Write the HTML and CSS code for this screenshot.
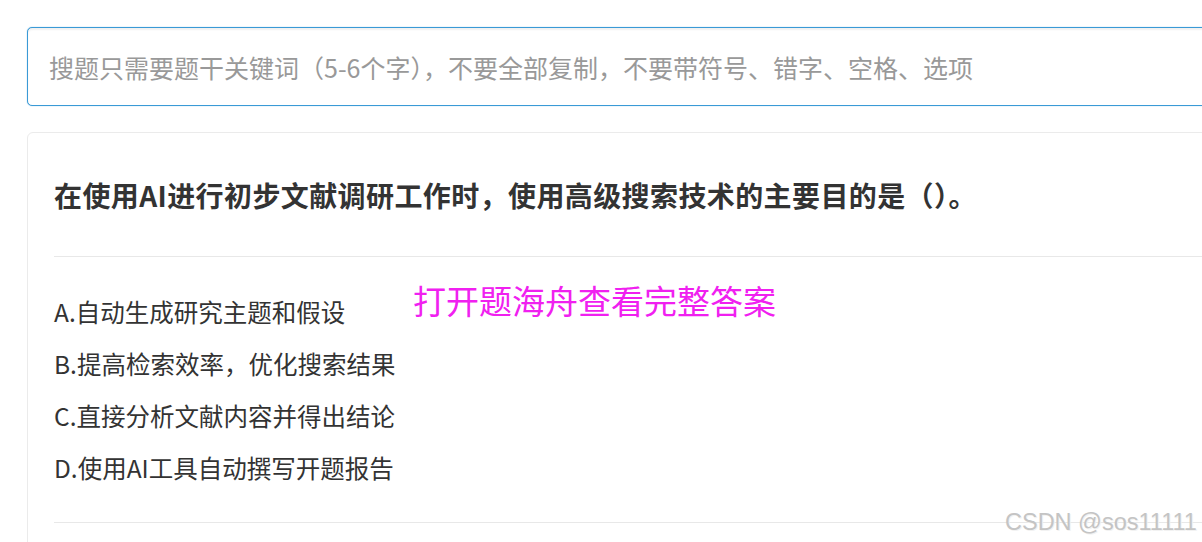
FILE: index.html
```html
<!DOCTYPE html>
<html lang="zh-CN">
<head>
<meta charset="utf-8">
<title>搜题</title>
<link rel="stylesheet" href="styles.css">
</head>
<body>
<div class="page">
  <div class="search">
    <input class="search-input" type="text" placeholder="搜题只需要题干关键词（5-6个字），不要全部复制，不要带符号、错字、空格、选项">
  </div>
  <div class="card">
    <h2 class="question">在使用AI进行初步文献调研工作时，使用高级搜索技术的主要目的是（）。</h2>
    <ul class="options">
      <li>A.自动生成研究主题和假设</li>
      <li>B.提高检索效率，优化搜索结果</li>
      <li>C.直接分析文献内容并得出结论</li>
      <li>D.使用AI工具自动撰写开题报告</li>
    </ul>
    <div class="promo">打开题海舟查看完整答案</div>
  </div>
</div>
<div class="watermark">CSDN @sos11111</div>
</body>
</html>
```

FILE: styles.css
```css
html, body {
  margin: 0;
  padding: 0;
  background: #ffffff;
  overflow: hidden;
  height: 542px;
}

body {
  font-family: "Noto Sans CJK SC", "Noto Sans", sans-serif;
  color: #333333;
  position: relative;
}

.page {
  padding: 27px 0 0 27px;
  width: 1240px;
}

.search {
  display: flex;
  height: 79px;
  box-sizing: border-box;
  border: 1px solid #3a9ad6;
  border-radius: 5px;
  box-shadow: 0 0 1px rgba(58, 154, 214, 0.8), inset 0 2px 2px rgba(0, 0, 0, 0.06);
  background: #fff;
  overflow: hidden;
}

.search-input {
  flex: 1;
  border: 0;
  padding: 0 21px;
  margin: 0;
  font-family: "Noto Sans CJK SC", "Noto Sans", sans-serif;
  font-size: 25px;
  color: #333;
  outline: none;
  background: transparent;
}

.search-input::placeholder {
  color: #999999;
}

.card {
  position: relative;
  margin-top: 26px;
  border: 1px solid #ebebeb;
  border-radius: 6px;
  padding: 0 26px;
  height: 600px;
}

.question {
  margin: 0;
  padding: 42px 0 41px;
  font-size: 28px;
  line-height: 40px;
  font-weight: 700;
  letter-spacing: 0.4px;
  color: #333333;
  border-bottom: 1px solid #e8e8e8;
}

.options {
  list-style: none;
  margin: 0;
  padding: 29px 0 28px;
  border-bottom: 1px solid #e8e8e8;
}

.options li {
  font-size: 24.5px;
  line-height: 52px;
  color: #333333;
}

.promo {
  position: absolute;
  left: 385px;
  top: 147px;
  font-size: 33px;
  line-height: 40px;
  color: #f020f0;
}

.watermark {
  position: absolute;
  left: 1005px;
  top: 508px;
  font-family: "Liberation Sans", Arial, sans-serif;
  font-size: 23.5px;
  line-height: 28px;
  color: #c4c4c4;
  text-shadow: 1px 1px 0 #f2f2f2;
  white-space: nowrap;
}
```
